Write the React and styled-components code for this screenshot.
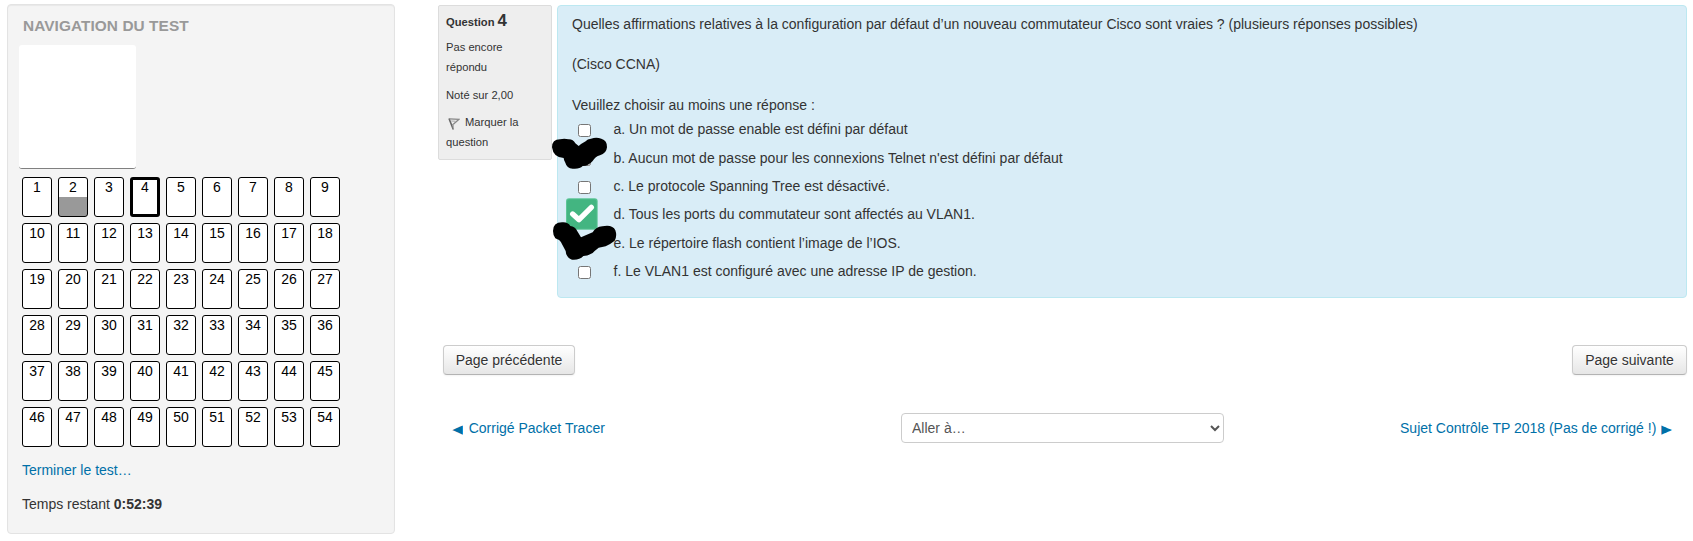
import React from "react";
import styled, { createGlobalStyle } from "styled-components";

const GlobalStyle = createGlobalStyle`
  *, *::before, *::after { box-sizing: border-box; }
  body {
    margin: 0;
    background: #fff;
    color: #333;
    font-family: "Liberation Sans", Arial, sans-serif;
    font-size: 14px;
    line-height: 20px;
  }
`;

const Page = styled.div`
  display: flex;
  align-items: flex-start;
  height: 541px;
  padding: 4px 6px 0 7px;
  overflow: hidden;
`;

const Sidebar = styled.aside`
  width: 388px;
  height: 530px;
  flex: none;
  padding: 11px 0 0 11px;
  background: #f4f4f4;
  border: 1px solid #e3e3e3;
  border-radius: 4px;
  box-shadow: inset 0 1px 1px rgba(0, 0, 0, 0.05);
`;

const SideTitle = styled.h2`
  margin: 0 0 9px 4px;
  font-size: 15.4px;
  letter-spacing: 0.07px;
  line-height: 20px;
  font-weight: bold;
  color: #999;
  text-transform: uppercase;
`;

const UserPicture = styled.div`
  width: 117px;
  height: 124px;
  background: #fff;
  border-bottom: 1px solid #808080;
  border-radius: 3px;
`;

const QuestionGrid = styled.nav`
  display: grid;
  grid-template-columns: repeat(9, 30px);
  gap: 6px;
  margin: 8px 0 0 3px;
`;

const QuestionCell = styled.a`
  height: 40px;
  text-align: center;
  color: #000;
  border: ${(p) => (p.$current ? 3 : 1)}px solid #000;
  line-height: ${(p) => (p.$current ? 14 : 18)}px;
  border-radius: 3px;
  background: ${(p) =>
    p.$answered ? "linear-gradient(#fff 19px, #999 19px)" : "#fff"};
`;

const SideText = styled.p`
  margin: ${(p) => p.$top}px 0 0 3px;
`;

const Link = styled.a`
  color: #0070a8;
  text-decoration: none;
`;

const Arrow = styled.span`
  display: inline-block;
  font-family: "DejaVu Sans", sans-serif;
  line-height: 1;
  transform: scaleY(1.35);
  margin: ${(p) => (p.$next ? "0 0 0 1px" : "0 2px 0 -1px")};
`;

const Main = styled.main`
  flex: 1;
  margin-left: 43px;
  padding-top: 1px;
`;

const Question = styled.section`
  display: flex;
  align-items: flex-start;
  justify-content: space-between;
`;

const Info = styled.div`
  width: 114px;
  height: 155px;
  padding: 5px 7px;
  background: #eee;
  border: 1px solid #dcdcdc;
  border-radius: 2px;
  font-size: 11.2px;
`;

const InfoTitle = styled.h3`
  margin: 0;
  height: 20px;
  font-size: 11.2px;
  line-height: 20px;
`;

const InfoNumber = styled.span`
  font-size: 16.8px;
`;

const InfoText = styled.div`
  margin-top: ${(p) => p.$top}px;
`;

const FlagIcon = styled.svg`
  width: 12px;
  height: 13px;
  margin: 0 5px 0 2px;
  vertical-align: -4px;
`;

const Content = styled.div`
  position: relative;
  width: 1130px;
  height: 293px;
  padding: 8px 14px;
  background: #d9edf7;
  border: 1px solid #bce8f1;
  border-radius: 4px;
`;

const Paragraph = styled.p`
  margin: 0 0 ${(p) => p.$bottom}px;
`;

const Answers = styled.div`
  display: grid;
  grid-template-rows: 29px 28px 28px 29px 28px 28px;
`;

const Answer = styled.label`
  display: flex;
  align-items: flex-start;
  padding-left: 6px;
`;

const Checkbox = styled.input`
  width: 13px;
  height: 13px;
  margin: 5px 22.5px 0 0;
`;

const Overlay = styled.svg`
  position: absolute;
  left: -7px;
  top: 131px;
  width: 67px;
  height: 124px;
`;

const Submit = styled.div`
  display: flex;
  justify-content: space-between;
  margin: 47px 0 0 5px;
`;

const Button = styled.button`
  width: ${(p) => p.$width}px;
  height: 30px;
  padding: 0;
  color: #333;
  font: inherit;
  text-shadow: 0 1px 1px rgba(255, 255, 255, 0.75);
  background: linear-gradient(#fff, #e6e6e6);
  border: 1px solid #ccc;
  border-bottom-color: #b3b3b3;
  border-radius: 4px;
  box-shadow: inset 0 1px 0 rgba(255, 255, 255, 0.2), 0 1px 2px rgba(0, 0, 0, 0.05);
`;

const ActivityNav = styled.div`
  display: grid;
  grid-template-columns: 448px 323px 1fr;
  align-items: center;
  margin: 38px 15px 0;
`;

const NextLink = styled(Link)`
  justify-self: end;
`;

const Jump = styled.select`
  height: 30px;
  padding: 4px 6px;
  color: #555;
  font: inherit;
  background: #fff;
  border: 1px solid #ccc;
  border-radius: 4px;
`;

const answers = [
  "a. Un mot de passe enable est défini par défaut",
  "b. Aucun mot de passe pour les connexions Telnet n'est défini par défaut",
  "c. Le protocole Spanning Tree est désactivé.",
  "d. Tous les ports du commutateur sont affectés au VLAN1.",
  "e. Le répertoire flash contient l’image de l’IOS.",
  "f. Le VLAN1 est configuré avec une adresse IP de gestion.",
];

export default function App() {
  return (
    <>
      <GlobalStyle />
      <Page>
        <Sidebar>
          <SideTitle>Navigation du test</SideTitle>
          <UserPicture />
          <QuestionGrid>
            {Array.from({ length: 54 }, (_, i) => (
              <QuestionCell key={i} $current={i === 3} $answered={i === 1}>
                {i + 1}
              </QuestionCell>
            ))}
          </QuestionGrid>
          <SideText $top={13}>
            <Link>Terminer le test…</Link>
          </SideText>
          <SideText $top={14}>
            Temps restant <b>0:52:39</b>
          </SideText>
        </Sidebar>
        <Main>
          <Question>
            <Info>
              <InfoTitle>
                Question <InfoNumber>4</InfoNumber>
              </InfoTitle>
              <InfoText $top={6}>Pas encore répondu</InfoText>
              <InfoText $top={8}>Noté sur 2,00</InfoText>
              <InfoText $top={7}>
                <FlagIcon viewBox="0 0 12 13" fill="none">
                  <path d="M1 1.5 L5.3 12.5" stroke="#666" strokeWidth="1.6" />
                  <path d="M1.5 1.8 L11 2.3 L4.2 8.2" stroke="#888" strokeWidth="1.3" />
                  <path d="M3.2 4 L7.5 4.2 M5.3 11.5 V7" stroke="#aaa" strokeWidth="1.1" />
                </FlagIcon>
                Marquer la question
              </InfoText>
            </Info>
            <Content>
              <Paragraph $bottom={20}>
                Quelles affirmations relatives à la configuration par défaut d’un nouveau
                commutateur Cisco sont vraies ? (plusieurs réponses possibles)
              </Paragraph>
              <Paragraph $bottom={21}>(Cisco CCNA)</Paragraph>
              <Paragraph $bottom={4}>Veuillez choisir au moins une réponse :</Paragraph>
              <Answers>
                {answers.map((text) => (
                  <Answer key={text}>
                    <Checkbox type="checkbox" />
                    {text}
                  </Answer>
                ))}
              </Answers>
              <Overlay viewBox="33 81 201 372">
                <rect x="78" y="265" width="95" height="94" rx="9" fill="#5cc596" />
                <rect x="81" y="268" width="89" height="88" rx="7" fill="#43b581" />
                <path
                  d="M98 312 L117 329 L154 292"
                  fill="none"
                  stroke="#fff"
                  strokeWidth="16"
                  strokeLinecap="round"
                  strokeLinejoin="round"
                />
                <path d="M36 112 Q36 88 60 88 Q73 84 85 88 Q99 87 106 100 L116 108 Q124 101 137 94 Q142 87 153 86 Q169 81 184 86 Q202 91 201 112 Q199 131 180 136 Q166 140 158 153 Q145 168 128 168 Q119 178 98 176 Q80 174 76 158 Q71 150 71 144 Q40 143 36 112Z" />
                <path d="M39 363 Q39 337 66 337 Q83 335 91 348 Q105 349 112 364 L123 382 L158 367 Q168 350 187 349 Q218 343 226 361 Q232 378 224 392 Q210 403 197 409 L176 413 Q164 422 158 429 Q144 438 130 438 Q118 451 96 449 Q78 442 77 423 L63 397 Q60 390 46 385 Q39 376 39 363Z" />
              </Overlay>
            </Content>
          </Question>
          <Submit>
            <Button $width={132}>Page précédente</Button>
            <Button $width={115}>Page suivante</Button>
          </Submit>
          <ActivityNav>
            <Link>
              <Arrow>◄</Arrow> Corrigé Packet Tracer
            </Link>
            <Jump>
              <option>Aller à…</option>
            </Jump>
            <NextLink>
              Sujet Contrôle TP 2018 (Pas de corrigé !) <Arrow $next>►</Arrow>
            </NextLink>
          </ActivityNav>
        </Main>
      </Page>
    </>
  );
}
